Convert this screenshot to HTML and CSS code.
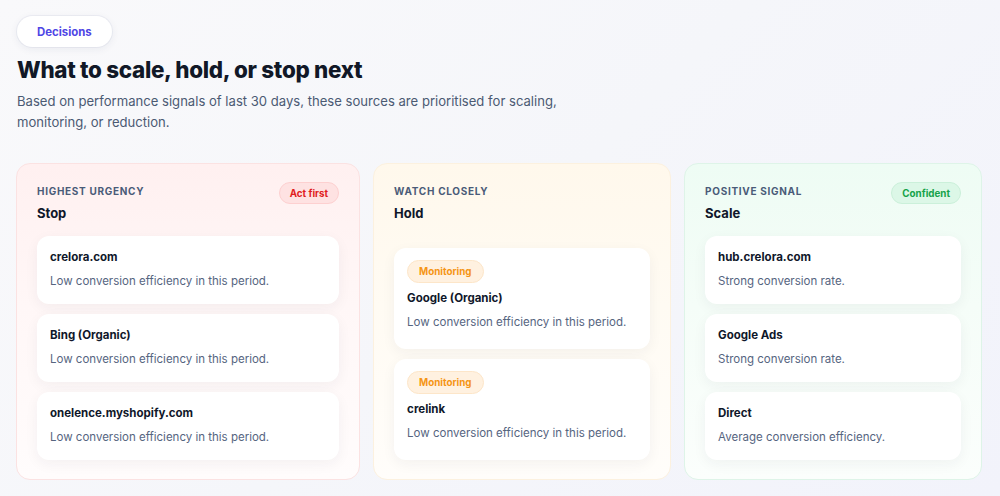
FILE: index.html
```html
<!DOCTYPE html>
<html lang="en">
<head>
<meta charset="utf-8">
<title>Decisions</title>
<link rel="stylesheet" href="styles.css">
</head>
<body>
<main class="page">
  <header class="intro">
    <span class="eyebrow">Decisions</span>
    <h1 class="title">What to scale, hold, or stop next</h1>
    <p class="lead">Based on performance signals of last 30 days, these sources are prioritised for scaling, monitoring, or reduction.</p>
  </header>

  <section class="columns">
    <article class="lane lane-stop">
      <div class="lane-head">
        <div>
          <div class="lane-label">Highest urgency</div>
          <h2 class="lane-title">Stop</h2>
        </div>
        <span class="badge badge-red">Act first</span>
      </div>
      <div class="items">
        <div class="item">
          <div class="item-title">crelora.com</div>
          <div class="item-desc">Low conversion efficiency in this period.</div>
        </div>
        <div class="item">
          <div class="item-title">Bing (Organic)</div>
          <div class="item-desc">Low conversion efficiency in this period.</div>
        </div>
        <div class="item">
          <div class="item-title">onelence.myshopify.com</div>
          <div class="item-desc">Low conversion efficiency in this period.</div>
        </div>
      </div>
    </article>

    <article class="lane lane-hold">
      <div class="lane-head">
        <div>
          <div class="lane-label">Watch closely</div>
          <h2 class="lane-title">Hold</h2>
        </div>
      </div>
      <div class="items items-end">
        <div class="item item-tagged">
          <span class="tag tag-orange">Monitoring</span>
          <div class="item-title">Google (Organic)</div>
          <div class="item-desc">Low conversion efficiency in this period.</div>
        </div>
        <div class="item item-tagged">
          <span class="tag tag-orange">Monitoring</span>
          <div class="item-title">crelink</div>
          <div class="item-desc">Low conversion efficiency in this period.</div>
        </div>
      </div>
    </article>

    <article class="lane lane-scale">
      <div class="lane-head">
        <div>
          <div class="lane-label">Positive signal</div>
          <h2 class="lane-title">Scale</h2>
        </div>
        <span class="badge badge-green">Confident</span>
      </div>
      <div class="items">
        <div class="item">
          <div class="item-title">hub.crelora.com</div>
          <div class="item-desc">Strong conversion rate.</div>
        </div>
        <div class="item">
          <div class="item-title">Google Ads</div>
          <div class="item-desc">Strong conversion rate.</div>
        </div>
        <div class="item">
          <div class="item-title">Direct</div>
          <div class="item-desc">Average conversion efficiency.</div>
        </div>
      </div>
    </article>
  </section>
</main>
</body>
</html>
```

FILE: styles.css
```css
* { box-sizing: border-box; }

html, body {
  margin: 0;
  height: 100%;
}

body {
  font-family: Inter, "Noto Sans", "Liberation Sans", sans-serif;
  background: linear-gradient(135deg, #f9f9fb 0%, #f5f6fa 50%, #f2f3fb 100%);
  color: #0f172a;
}

.page {
  padding: 16px 18px 18px 16px;
}

.intro {
  display: flex;
  flex-direction: column;
  align-items: flex-start;
}

.eyebrow {
  display: inline-flex;
  align-items: center;
  height: 31px;
  padding: 0 20px;
  margin-left: 1px;
  border-radius: 16px;
  background: #ffffff;
  box-shadow: 0 2px 8px rgba(30, 41, 80, 0.07), 0 0 0 1px rgba(230, 232, 240, 0.6);
  color: #4f46e5;
  font-size: 11.4px;
  font-weight: 700;
}

.title {
  margin: 9px 0 0 1px;
  font-size: 22.4px;
  line-height: 28px;
  font-weight: 800;
  letter-spacing: -0.3px;
  color: #111827;
}

.lead {
  margin: 7px 0 0 1px;
  max-width: 560px;
  font-size: 13.1px;
  line-height: 21px;
  color: #4b5a73;
}

.columns {
  display: grid;
  grid-template-columns: 1.155fr 1fr 1fr;
  gap: 13px;
  margin-top: 30px;
}

.lane {
  display: flex;
  flex-direction: column;
  padding: 20px 20px 19px;
  border-radius: 14px;
  border: 1px solid transparent;
}

.lane-stop {
  background: linear-gradient(180deg, #fff0f0 0%, #fff7f7 45%, #fffcfc 100%);
  border-color: #fbe2e2;
}

.lane-hold {
  background: linear-gradient(180deg, #fff8ec 0%, #fffbf3 45%, #fffdfa 100%);
  border-color: #fcf1df;
}

.lane-scale {
  background: linear-gradient(180deg, #eefcf4 0%, #f5fdf8 45%, #fbfefc 100%);
  border-color: #def4e8;
}

.lane-head {
  display: flex;
  justify-content: space-between;
  align-items: flex-start;
}

.lane-label {
  font-size: 10px;
  line-height: 14px;
  font-weight: 700;
  letter-spacing: 0.7px;
  text-transform: uppercase;
  color: #4a5b78;
}

.lane-title {
  margin: 6px 0 0;
  font-size: 13px;
  line-height: 18px;
  font-weight: 700;
  color: #0f172a;
}

.badge {
  display: inline-flex;
  align-items: center;
  height: 22px;
  padding: 0 10px;
  margin-top: -2px;
  border-radius: 11px;
  font-size: 9.8px;
  font-weight: 700;
  border: 1px solid transparent;
}

.badge-red {
  background: #fee2e2;
  border-color: #fdd0d0;
  color: #e11d1d;
}

.badge-green {
  background: #dcf7e7;
  border-color: #cbf0da;
  color: #16a34a;
}

.items {
  display: flex;
  flex-direction: column;
  gap: 10px;
  margin-top: 14px;
}

.items-end {
  margin-top: auto;
  padding-top: 25px;
}

.item {
  display: flex;
  flex-direction: column;
  align-items: flex-start;
  padding: 13px 13px 14px;
  border-radius: 12px;
  background: #ffffff;
  box-shadow: 0 4px 14px rgba(30, 41, 59, 0.05);
}

.item-tagged {
  padding-top: 12px;
  padding-bottom: 18px;
}

.item-title {
  font-size: 11.5px;
  line-height: 16px;
  font-weight: 700;
  color: #0f172a;
}

.item-desc {
  margin-top: 7px;
  font-size: 11.5px;
  line-height: 18px;
  color: #56657f;
}

.tag {
  display: inline-flex;
  align-items: center;
  height: 23px;
  padding: 0 11px;
  margin-bottom: 7px;
  border-radius: 12px;
  font-size: 9.8px;
  font-weight: 700;
  border: 1px solid transparent;
}

.tag-orange {
  background: #fff1e0;
  border-color: #fde6c9;
  color: #f59516;
}
```
